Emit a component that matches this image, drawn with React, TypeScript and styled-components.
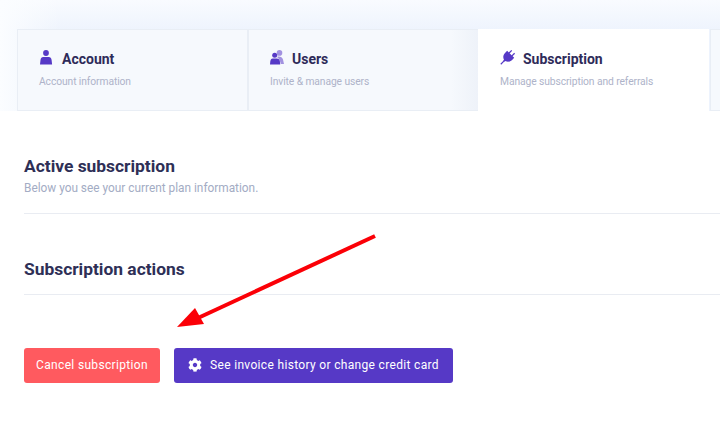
import { FaCog } from "react-icons/fa";
import styled, { createGlobalStyle } from "styled-components";

const GlobalStyle = createGlobalStyle`
  html, body {
    margin: 0;
    padding: 0;
    background: #fff;
    overflow: hidden;
  }
  * {
    box-sizing: border-box;
  }
`;

const App = (): JSX.Element => {
  return (
    <>
      <GlobalStyle />
      <Page>
        <TabBar>
          <Tab>
            <TabTitle>
              <UserIcon />
              Account
            </TabTitle>
            <TabText>Account information</TabText>
          </Tab>
          <Tab $beforeActive>
            <TabTitle>
              <UsersIcon />
              Users
            </TabTitle>
            <TabText>Invite &amp; manage users</TabText>
          </Tab>
          <Tab $active>
            <TabTitle>
              <PlugIcon />
              Subscription
            </TabTitle>
            <TabText>Manage subscription and referrals</TabText>
          </Tab>
          <Tab />
        </TabBar>
        <Content>
          <Section>
            <Heading>Active subscription</Heading>
            <SubText>Below you see your current plan information.</SubText>
          </Section>
          <Section $second>
            <Heading>Subscription actions</Heading>
          </Section>
          <Actions>
            <CancelButton>Cancel subscription</CancelButton>
            <InvoiceButton>
              <FaCog size={14} />
              See invoice history or change credit card
            </InvoiceButton>
          </Actions>
        </Content>
        <Arrow viewBox="0 0 230 110" aria-hidden="true">
          <line x1="215" y1="11" x2="38" y2="93" stroke="#fb0007" strokeWidth="4" />
          <polygon points="17,102 35,83 44,99" fill="#fb0007" />
        </Arrow>
      </Page>
    </>
  );
};

export default App;

const UserIcon = () => (
  <IconSvg $slot={15} viewBox="0 0 15 15" aria-hidden="true">
    <circle cx="7" cy="3" r="2.900" fill="#5639c6" />
    <path d="M4.200 7.100h5.600c1.500 0 2.600 1.200 2.800 2.800l.5 4.700H1l.5-4.700c.2-1.600 1.200-2.800 2.700-2.800z" fill="#5639c6" />
  </IconSvg>
);

const UsersIcon = () => (
  <IconSvg $slot={14} viewBox="0 0 14 15" aria-hidden="true">
    <circle cx="9.500" cy="2.900" r="2.800" fill="#a292e0" />
    <path d="M7 6.900c2.600-1 5.300.3 6 2.700l1 4.400h-3.200C10.300 11 9 8.500 7 6.900z" fill="#a292e0" />
    <circle cx="4.700" cy="5.200" r="2.500" fill="#5639c6" />
    <path d="M2.700 8.400h4.100c1.700 0 2.900 1.300 3.100 3l.3 3.200H0l.3-3.200c.2-1.700 1-3 2.400-3z" fill="#5639c6" />
  </IconSvg>
);

const PlugIcon = () => (
  <IconSvg $slot={15} viewBox="0 0 15 15" aria-hidden="true">
    <g transform="rotate(45 7.500 7.500)" fill="#5639c6">
      <rect x="4.800" y="-0.500" width="1.300" height="4" />
      <rect x="8.900" y="-0.500" width="1.300" height="4" />
      <path d="M2.500 3h10v3c0 3-2 5-4 5.400v1.100h-2v-1.100c-2-.4-4-2.400-4-5.400z" />
      <rect x="6.900" y="12" width="1.200" height="5" />
    </g>
  </IconSvg>
);

const Page = styled.div`
  position: relative;
  width: 720px;
  height: 436px;
  background: #fff;
  overflow: hidden;
  font-family: "Roboto", "Liberation Sans", sans-serif;
`;

const TabBar = styled.div`
  display: flex;
  height: 111px;
  padding: 29px 0 0 17px;
  background:
    linear-gradient(90deg, #fbfdff 0%, rgba(251, 253, 255, 0) 60px),
    linear-gradient(180deg, #f9fbff 0%, #edf3fd 30%, #edf3fd 100%);
`;

const Tab = styled.div<{ $active?: boolean; $beforeActive?: boolean }>`
  flex: 0 0 231px;
  padding: 19px 21px 0;
  margin-right: ${(p) => (p.$active ? "1px" : "0")};
  margin-left: ${(p) => (p.$active ? "-1px" : "0")};
  background: ${(p) =>
    p.$active
      ? "#fff"
      : p.$beforeActive
        ? "linear-gradient(90deg, #f6f9fd 88%, #eef2f9 100%)"
        : "#f6f9fd"};
  border: 1px solid ${(p) => (p.$active ? "transparent" : "#e9eef5")};
`;

const TabTitle = styled.div`
  display: flex;
  align-items: center;
  gap: 8px;
  height: 20px;
  font-size: 14px;
  font-weight: 700;
  color: #2e2b59;
`;

const IconSvg = styled.svg<{ $slot: number }>`
  width: ${(p) => p.$slot}px;
  height: 15px;
  flex: none;
  margin-top: -3px;
  overflow: visible;
`;

const TabText = styled.div`
  margin-top: 6px;
  font-size: 10.300px;
  line-height: 14px;
  letter-spacing: -0.1px;
  color: #aeb3c9;
`;

const Content = styled.div`
  padding: 0 0 0 24px;
`;

const Section = styled.section<{ $second?: boolean }>`
  margin-top: 44px;
  padding-bottom: ${(p) => (p.$second ? "14px" : "17px")};
  border-bottom: 1px solid #e9ecf2;
`;

const Heading = styled.h2`
  margin: 0;
  font-size: 17.400px;
  line-height: 22px;
  font-weight: 700;
  color: #2e2f56;
`;

const SubText = styled.p`
  margin: 3px 0 0;
  font-size: 11.850px;
  line-height: 16px;
  color: #a3acc4;
`;

const Actions = styled.div`
  display: flex;
  gap: 14px;
  margin-top: 53px;
`;

const Button = styled.button`
  display: flex;
  align-items: center;
  justify-content: center;
  height: 35px;
  padding: 0;
  border: 0;
  border-radius: 3px;
  font-family: inherit;
  font-size: 12px;
  font-weight: 400;
  letter-spacing: 0.33px;
  color: #fff;
`;

const CancelButton = styled(Button)`
  width: 136px;
  padding-bottom: 2px;
  background: #ff5a5f;
`;

const InvoiceButton = styled(Button)`
  width: 279px;
  gap: 8px;
  padding-bottom: 1px;
  background: #5639c6;
`;

const Arrow = styled.svg`
  position: absolute;
  left: 160px;
  top: 225px;
  width: 230px;
  height: 110px;
`;
